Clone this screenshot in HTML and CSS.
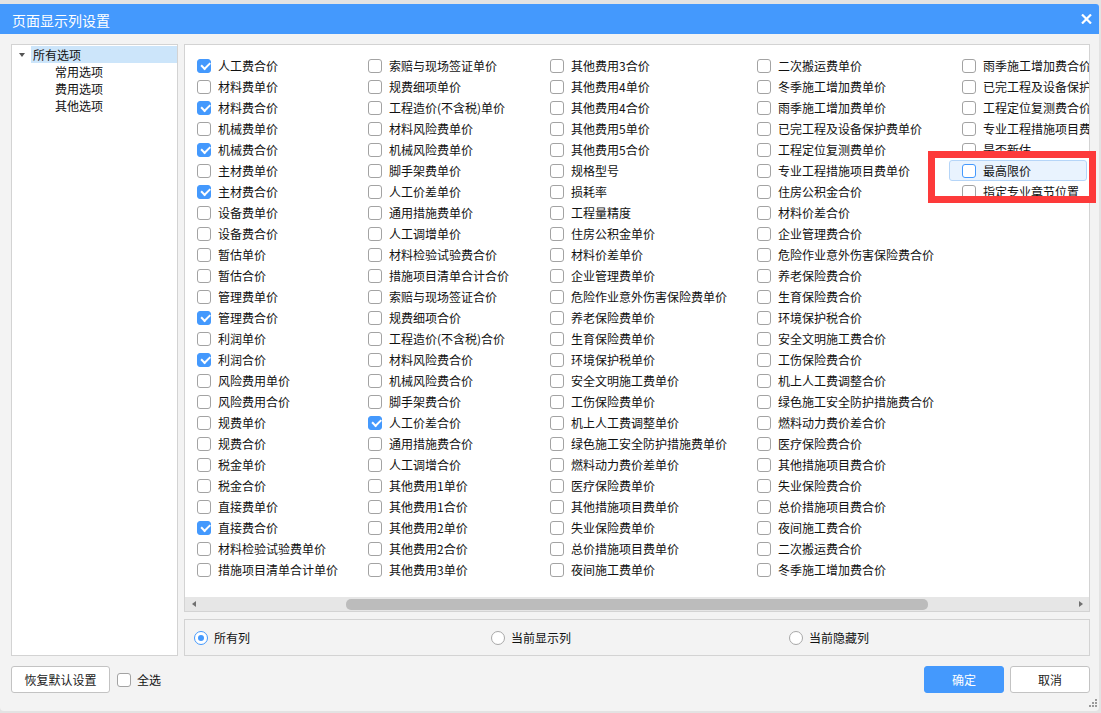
FILE: index.html
```html
<!DOCTYPE html>
<html lang="zh">
<head>
<meta charset="utf-8">
<title>页面显示列设置</title>
<link rel="stylesheet" href="styles.css">
</head>
<body>
<div class="dialog">
  <div class="titlebar">
    <span class="title">页面显示列设置</span>
    <svg class="close" width="11" height="10" viewBox="0 0 11 10"><path d="M1 0.5 L10 9.5 M10 0.5 L1 9.5" stroke="#fff" stroke-width="2.2" fill="none"/></svg>
  </div>
  <div class="body">
    <div class="main">
      <div class="tree">
        <div class="node root"><span class="caret"></span><span class="label sel">所有选项</span></div>
        <div class="node child">常用选项</div>
        <div class="node child">费用选项</div>
        <div class="node child">其他选项</div>
      </div>
      <div class="right">
        <div class="list">
          <div class="cols">
            <div class="col c1">
              <div class="item"><span class="cb on"></span><span>人工费合价</span></div>
              <div class="item"><span class="cb"></span><span>材料费单价</span></div>
              <div class="item"><span class="cb on"></span><span>材料费合价</span></div>
              <div class="item"><span class="cb"></span><span>机械费单价</span></div>
              <div class="item"><span class="cb on"></span><span>机械费合价</span></div>
              <div class="item"><span class="cb"></span><span>主材费单价</span></div>
              <div class="item"><span class="cb on"></span><span>主材费合价</span></div>
              <div class="item"><span class="cb"></span><span>设备费单价</span></div>
              <div class="item"><span class="cb"></span><span>设备费合价</span></div>
              <div class="item"><span class="cb"></span><span>暂估单价</span></div>
              <div class="item"><span class="cb"></span><span>暂估合价</span></div>
              <div class="item"><span class="cb"></span><span>管理费单价</span></div>
              <div class="item"><span class="cb on"></span><span>管理费合价</span></div>
              <div class="item"><span class="cb"></span><span>利润单价</span></div>
              <div class="item"><span class="cb on"></span><span>利润合价</span></div>
              <div class="item"><span class="cb"></span><span>风险费用单价</span></div>
              <div class="item"><span class="cb"></span><span>风险费用合价</span></div>
              <div class="item"><span class="cb"></span><span>规费单价</span></div>
              <div class="item"><span class="cb"></span><span>规费合价</span></div>
              <div class="item"><span class="cb"></span><span>税金单价</span></div>
              <div class="item"><span class="cb"></span><span>税金合价</span></div>
              <div class="item"><span class="cb"></span><span>直接费单价</span></div>
              <div class="item"><span class="cb on"></span><span>直接费合价</span></div>
              <div class="item"><span class="cb"></span><span>材料检验试验费单价</span></div>
              <div class="item"><span class="cb"></span><span>措施项目清单合计单价</span></div>
            </div>
            <div class="col c2">
              <div class="item"><span class="cb"></span><span>索赔与现场签证单价</span></div>
              <div class="item"><span class="cb"></span><span>规费细项单价</span></div>
              <div class="item"><span class="cb"></span><span>工程造价(不含税)单价</span></div>
              <div class="item"><span class="cb"></span><span>材料风险费单价</span></div>
              <div class="item"><span class="cb"></span><span>机械风险费单价</span></div>
              <div class="item"><span class="cb"></span><span>脚手架费单价</span></div>
              <div class="item"><span class="cb"></span><span>人工价差单价</span></div>
              <div class="item"><span class="cb"></span><span>通用措施费单价</span></div>
              <div class="item"><span class="cb"></span><span>人工调增单价</span></div>
              <div class="item"><span class="cb"></span><span>材料检验试验费合价</span></div>
              <div class="item"><span class="cb"></span><span>措施项目清单合计合价</span></div>
              <div class="item"><span class="cb"></span><span>索赔与现场签证合价</span></div>
              <div class="item"><span class="cb"></span><span>规费细项合价</span></div>
              <div class="item"><span class="cb"></span><span>工程造价(不含税)合价</span></div>
              <div class="item"><span class="cb"></span><span>材料风险费合价</span></div>
              <div class="item"><span class="cb"></span><span>机械风险费合价</span></div>
              <div class="item"><span class="cb"></span><span>脚手架费合价</span></div>
              <div class="item"><span class="cb on"></span><span>人工价差合价</span></div>
              <div class="item"><span class="cb"></span><span>通用措施费合价</span></div>
              <div class="item"><span class="cb"></span><span>人工调增合价</span></div>
              <div class="item"><span class="cb"></span><span>其他费用1单价</span></div>
              <div class="item"><span class="cb"></span><span>其他费用1合价</span></div>
              <div class="item"><span class="cb"></span><span>其他费用2单价</span></div>
              <div class="item"><span class="cb"></span><span>其他费用2合价</span></div>
              <div class="item"><span class="cb"></span><span>其他费用3单价</span></div>
            </div>
            <div class="col c3">
              <div class="item"><span class="cb"></span><span>其他费用3合价</span></div>
              <div class="item"><span class="cb"></span><span>其他费用4单价</span></div>
              <div class="item"><span class="cb"></span><span>其他费用4合价</span></div>
              <div class="item"><span class="cb"></span><span>其他费用5单价</span></div>
              <div class="item"><span class="cb"></span><span>其他费用5合价</span></div>
              <div class="item"><span class="cb"></span><span>规格型号</span></div>
              <div class="item"><span class="cb"></span><span>损耗率</span></div>
              <div class="item"><span class="cb"></span><span>工程量精度</span></div>
              <div class="item"><span class="cb"></span><span>住房公积金单价</span></div>
              <div class="item"><span class="cb"></span><span>材料价差单价</span></div>
              <div class="item"><span class="cb"></span><span>企业管理费单价</span></div>
              <div class="item"><span class="cb"></span><span>危险作业意外伤害保险费单价</span></div>
              <div class="item"><span class="cb"></span><span>养老保险费单价</span></div>
              <div class="item"><span class="cb"></span><span>生育保险费单价</span></div>
              <div class="item"><span class="cb"></span><span>环境保护税单价</span></div>
              <div class="item"><span class="cb"></span><span>安全文明施工费单价</span></div>
              <div class="item"><span class="cb"></span><span>工伤保险费单价</span></div>
              <div class="item"><span class="cb"></span><span>机上人工费调整单价</span></div>
              <div class="item"><span class="cb"></span><span>绿色施工安全防护措施费单价</span></div>
              <div class="item"><span class="cb"></span><span>燃料动力费价差单价</span></div>
              <div class="item"><span class="cb"></span><span>医疗保险费单价</span></div>
              <div class="item"><span class="cb"></span><span>其他措施项目费单价</span></div>
              <div class="item"><span class="cb"></span><span>失业保险费单价</span></div>
              <div class="item"><span class="cb"></span><span>总价措施项目费单价</span></div>
              <div class="item"><span class="cb"></span><span>夜间施工费单价</span></div>
            </div>
            <div class="col c4">
              <div class="item"><span class="cb"></span><span>二次搬运费单价</span></div>
              <div class="item"><span class="cb"></span><span>冬季施工增加费单价</span></div>
              <div class="item"><span class="cb"></span><span>雨季施工增加费单价</span></div>
              <div class="item"><span class="cb"></span><span>已完工程及设备保护费单价</span></div>
              <div class="item"><span class="cb"></span><span>工程定位复测费单价</span></div>
              <div class="item"><span class="cb"></span><span>专业工程措施项目费单价</span></div>
              <div class="item"><span class="cb"></span><span>住房公积金合价</span></div>
              <div class="item"><span class="cb"></span><span>材料价差合价</span></div>
              <div class="item"><span class="cb"></span><span>企业管理费合价</span></div>
              <div class="item"><span class="cb"></span><span>危险作业意外伤害保险费合价</span></div>
              <div class="item"><span class="cb"></span><span>养老保险费合价</span></div>
              <div class="item"><span class="cb"></span><span>生育保险费合价</span></div>
              <div class="item"><span class="cb"></span><span>环境保护税合价</span></div>
              <div class="item"><span class="cb"></span><span>安全文明施工费合价</span></div>
              <div class="item"><span class="cb"></span><span>工伤保险费合价</span></div>
              <div class="item"><span class="cb"></span><span>机上人工费调整合价</span></div>
              <div class="item"><span class="cb"></span><span>绿色施工安全防护措施费合价</span></div>
              <div class="item"><span class="cb"></span><span>燃料动力费价差合价</span></div>
              <div class="item"><span class="cb"></span><span>医疗保险费合价</span></div>
              <div class="item"><span class="cb"></span><span>其他措施项目费合价</span></div>
              <div class="item"><span class="cb"></span><span>失业保险费合价</span></div>
              <div class="item"><span class="cb"></span><span>总价措施项目费合价</span></div>
              <div class="item"><span class="cb"></span><span>夜间施工费合价</span></div>
              <div class="item"><span class="cb"></span><span>二次搬运费合价</span></div>
              <div class="item"><span class="cb"></span><span>冬季施工增加费合价</span></div>
            </div>
            <div class="col c5">
              <div class="item"><span class="cb"></span><span>雨季施工增加费合价</span></div>
              <div class="item"><span class="cb"></span><span>已完工程及设备保护费合价</span></div>
              <div class="item"><span class="cb"></span><span>工程定位复测费合价</span></div>
              <div class="item"><span class="cb"></span><span>专业工程措施项目费合价</span></div>
              <div class="item"><span class="cb"></span><span>是否新估</span></div>
              <div class="item hover"><span class="cb"></span><span>最高限价</span></div>
              <div class="item"><span class="cb"></span><span>指定专业章节位置</span></div>
            </div>
          </div>
          <div class="hscroll">
            <span class="arrow-l"></span>
            <span class="thumb"></span>
            <span class="arrow-r"></span>
          </div>
        </div>
        <div class="radios">
          <label class="radio"><span class="rd on"></span><span>所有列</span></label>
          <label class="radio"><span class="rd"></span><span>当前显示列</span></label>
          <label class="radio"><span class="rd"></span><span>当前隐藏列</span></label>
        </div>
      </div>
    </div>
    <div class="footer">
      <button class="btn reset">恢复默认设置</button>
      <label class="selall"><span class="cb"></span><span>全选</span></label>
      <span class="spacer"></span>
      <button class="btn primary">确定</button>
      <button class="btn">取消</button>
    </div>
  </div>
  <svg class="grip" width="8" height="8" viewBox="0 0 8 8"><rect x="6" y="0" width="2" height="2" fill="#9a9a9a"/><rect x="3" y="3" width="2" height="2" fill="#9a9a9a"/><rect x="6" y="3" width="2" height="2" fill="#9a9a9a"/><rect x="0" y="6" width="2" height="2" fill="#9a9a9a"/><rect x="3" y="6" width="2" height="2" fill="#9a9a9a"/><rect x="6" y="6" width="2" height="2" fill="#9a9a9a"/></svg>
</div>
<div class="annotation"></div>
</body>
</html>
```
FILE: styles.css
```css
* { box-sizing: border-box; }
html, body { margin: 0; padding: 0; }
body {
  width: 1101px;
  height: 713px;
  overflow: hidden;
  position: relative;
  background: #e3e3e3;
  font-family: "Noto Sans CJK SC", "Microsoft YaHei", sans-serif;
  font-size: 12px;
  color: #111;
}
.dialog {
  position: relative;
  margin-top: 4px;
  width: 1099px;
  height: 707px;
  background: #f3f3f3;
  border-radius: 0 3px 4px 4px;
  display: flex;
  flex-direction: column;
  overflow: hidden;
}
.titlebar {
  height: 30px;
  flex: none;
  background: #4499fd;
  color: #fff;
  display: flex;
  align-items: center;
  justify-content: space-between;
  padding: 0 7px 0 12px;
}
.title { font-size: 14px; line-height: 30px; padding-top: 1px; }
.close { display: block; margin-top: 0; }
.body {
  flex: 1;
  display: flex;
  flex-direction: column;
  padding: 10px 9px 0 11px;
}
.main { display: flex; gap: 6px; height: 612px; flex: none; }
.tree {
  width: 167px;
  background: #fff;
  border: 1px solid #d3d3d3;
  padding-top: 1px;
}
.node { height: 17px; display: flex; align-items: center; white-space: nowrap; }
.caret {
  width: 0; height: 0;
  margin-left: 7px;
  margin-right: 6px;
  border-left: 3.5px solid transparent;
  border-right: 3.5px solid transparent;
  border-top: 4px solid #555;
}
.label.sel {
  flex: 1;
  height: 17px;
  line-height: 17px;
  background: #cce5fa;
  padding-left: 2px;
}
.child { padding-left: 43px; }
.right { width: 906px; display: flex; flex-direction: column; gap: 7px; }
.list {
  height: 568px;
  background: #fff;
  border: 1px solid #d3d3d3;
  display: flex;
  flex-direction: column;
}
.cols {
  flex: 1;
  overflow: hidden;
  display: flex;
  padding: 10px 0 0 12px;
}
.col { flex: none; display: flex; flex-direction: column; }
.c1 { width: 171px; }
.c2 { width: 182px; }
.c3 { width: 207px; }
.c4 { width: 205px; }
.c5 { width: 200px; }
.item {
  height: 21px;
  display: flex;
  align-items: center;
  gap: 7px;
  white-space: nowrap;
}
.cb {
  position: relative;
  flex: none;
  width: 14px;
  height: 14px;
  border: 1px solid #a3a3a3;
  border-radius: 3px;
  background: #fff;
}
.cb.on { background: #4499fd; border-color: #4499fd; }
.cb.on::after {
  content: "";
  position: absolute;
  left: 3px;
  top: 2.5px;
  width: 7px;
  height: 3.5px;
  border-left: 2px solid #fff;
  border-bottom: 2px solid #fff;
  transform: rotate(-45deg);
}
.item.hover {
  margin-left: -13px;
  padding-left: 12px;
  width: 138px;
  background: #e9f3fe;
  border: 1px solid #b5d5f8;
  border-radius: 3px;
}
.item.hover .cb { border-color: #4499fd; }
.hscroll {
  flex: none;
  height: 14px;
  background: #e6e6e6;
  display: flex;
  align-items: center;
  padding: 0 6px 0 7px;
}
.arrow-l {
  width: 0; height: 0;
  border-top: 3.5px solid transparent;
  border-bottom: 3.5px solid transparent;
  border-right: 4px solid #707070;
}
.arrow-r {
  width: 0; height: 0;
  margin-left: auto;
  border-top: 3.5px solid transparent;
  border-bottom: 3.5px solid transparent;
  border-left: 4px solid #707070;
}
.thumb {
  margin-left: 150px;
  width: 582px;
  height: 11px;
  border-radius: 5px;
  background: #bcbcbc;
}
.radios {
  height: 37px;
  border: 1px solid #d3d3d3;
  display: grid;
  grid-template-columns: 297px 298px 1fr;
  align-items: center;
  padding-left: 9px;
}
.radio { display: flex; align-items: center; gap: 6px; white-space: nowrap; }
.rd {
  flex: none;
  width: 14px;
  height: 14px;
  border-radius: 50%;
  border: 1px solid #a8a8a8;
  background: #fff;
  display: flex;
  align-items: center;
  justify-content: center;
}
.rd.on { border-color: #4499fd; }
.rd.on::after {
  content: "";
  width: 6px;
  height: 6px;
  border-radius: 50%;
  background: #4499fd;
}
.footer {
  margin-top: 10px;
  height: 27px;
  display: flex;
  align-items: center;
}
.btn {
  height: 27px;
  width: 80px;
  border: 1px solid #c3c3c3;
  border-radius: 3px;
  background: #fff;
  font-family: inherit;
  font-size: 12px;
  color: #222;
  padding: 0;
  margin-left: 6px;
}
.btn.reset { width: 99px; margin-left: 0; }
.btn.primary { background: #4499fd; border-color: #4499fd; color: #fff; }
.selall { display: flex; align-items: center; gap: 6px; margin-left: 7px; }
.spacer { flex: 1; }
.grip { position: absolute; right: 2px; bottom: 4px; }
.annotation {
  position: absolute;
  left: 928px;
  top: 151px;
  width: 168px;
  height: 52px;
  border: 7px solid #fd3a3a;
}
```
